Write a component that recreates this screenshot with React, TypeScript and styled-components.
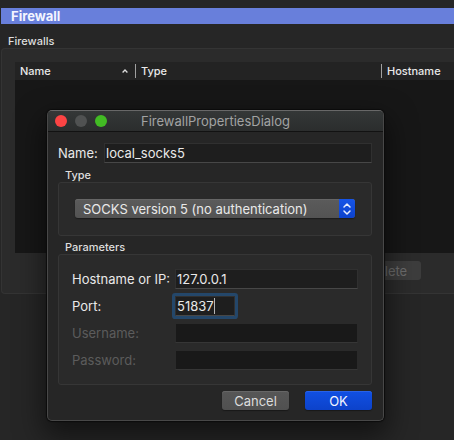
import React from "react";
import styled, { createGlobalStyle } from "styled-components";

const GlobalStyle = createGlobalStyle`
  *, *::before, *::after { box-sizing: border-box; }
  html, body { margin: 0; background: #262626; }
  body, button, input, select {
    font-family: Inter, "Liberation Sans", sans-serif;
    font-size: 13px;
    color: #e9e9e9;
  }
`;

const Page = styled.main`
  position: relative;
  min-height: 100vh;
  padding: 8px 0 0 1px;
  overflow: hidden;
  background: #262626;
`;

const Banner = styled.h1`
  margin: 0;
  padding-left: 10px;
  height: 16px;
  font-size: 13px;
  line-height: 16px;
  font-weight: 700;
  color: #f4f5ff;
  background: #687fdb;
`;

const Group = styled.fieldset<{ $gap: number }>`
  margin: ${(p) => p.$gap}px 0 0;
  padding: 0;
  border: 0;
  min-width: 0;
`;

const Caption = styled.legend<{ $height: number }>`
  display: block;
  padding: 0 0 0 7px;
  height: ${(p) => p.$height}px;
  line-height: ${(p) => p.$height}px;
  font-size: 11px;
  font-weight: 500;
  color: #dedede;
`;

const OuterPanel = styled.div`
  padding: 13px 0 13px 13px;
  border: 1px solid #343434;
  border-right: 0;
  border-radius: 4px 0 0 4px;
  background: #2b2b2b;
`;

const List = styled.table`
  width: 100%;
  table-layout: fixed;
  border-collapse: collapse;
  background: #171717;
`;

const Heading = styled.th<{ $width?: number }>`
  width: ${(p) => (p.$width ? `${p.$width}px` : "auto")};
  height: 18px;
  padding: 0;
  background: #232323;
  font-size: 11px;
  line-height: 16px;
  font-weight: 500;
  text-align: left;
`;

const HeadingInner = styled.div<{ $divider?: boolean }>`
  display: flex;
  align-items: center;
  justify-content: space-between;
  height: 14px;
  padding: 0 7px 0 5px;
  border-right: ${(p) => (p.$divider ? "1px solid #a0a0a0" : "0")};
`;

const EmptyCell = styled.td`
  height: 173px;
  padding: 0;
`;

const Actions = styled.div`
  display: flex;
  justify-content: flex-end;
  padding: 8px 33px 0 0;
`;

const Button = styled.button<{ $primary?: boolean }>`
  width: 67px;
  height: 19px;
  padding: 0;
  border: 0;
  border-radius: 3px;
  line-height: 18px;
  color: ${(p) => (p.$primary ? "#f2f5ff" : "#dddddd")};
  background: ${(p) =>
    p.$primary ? "linear-gradient(#1150e3, #0c42ca)" : "linear-gradient(#575757, #505050)"};
  box-shadow: inset 0 1px 0 ${(p) => (p.$primary ? "#2862e8" : "#666666")}, 0 1px 1px #191919;

  &:disabled {
    color: #6c6c6c;
    background: #3d3d3d;
    box-shadow: none;
  }
`;

const Dialog = styled.section`
  position: absolute;
  top: 110px;
  left: 47px;
  right: 70px;
  border: 1px solid #484848;
  border-top-color: #686868;
  border-radius: 5px;
  background: #262626;
  box-shadow: 0 0 1px 1px #0c0c0c, 0 12px 28px 4px rgba(0, 0, 0, 0.5);
`;

const TitleBar = styled.header`
  display: grid;
  grid-template-columns: 1fr auto 1fr;
  align-items: center;
  height: 21px;
  padding: 0 7px;
  border-bottom: 1px solid #121212;
  border-radius: 4px 4px 0 0;
  background: linear-gradient(#343737, #2b2d2d);
`;

const Lights = styled.div`
  display: flex;
  gap: 8px;
`;

const Light = styled.button<{ $color: string }>`
  width: 12px;
  height: 12px;
  padding: 0;
  border: 0;
  border-radius: 50%;
  background: ${(p) => p.$color};
`;

const Title = styled.h2`
  margin: 0;
  font-size: 13px;
  line-height: 20px;
  font-weight: 400;
  color: #a2a3a3;
`;

const Form = styled.form`
  padding: 11px 11px 10px 10px;
`;

const NameRow = styled.div`
  display: grid;
  grid-template-columns: 46px 1fr;
  align-items: center;
`;

const Panel = styled.div<{ $pad: string }>`
  padding: ${(p) => p.$pad};
  border: 1px solid #363636;
  border-radius: 3px;
  background: #2a2a2a;
`;

const Fields = styled.div`
  display: grid;
  grid-template-columns: 103px 1fr;
  row-gap: 7px;
  align-items: center;
`;

const Label = styled.label<{ $dim?: boolean }>`
  line-height: 20px;
  white-space: nowrap;
  color: ${(p) => (p.$dim ? "#5c5c5c" : "#e9e9e9")};
`;

const TextBox = styled.input`
  display: block;
  width: 100%;
  min-width: 0;
  height: 20px;
  padding: 0 1px;
  border: 1px solid #303030;
  border-bottom-color: #474747;
  border-radius: 0;
  outline: none;
  background: #1e1e1e;

  &:disabled {
    border-color: #2a2a2a;
    border-bottom-color: #363636;
    background: #191919;
  }
`;

const PortBox = styled.div`
  position: relative;
  width: 60px;
  border-radius: 1px;
  box-shadow: 0 0 0 3px #24476a;
`;

const Caret = styled.span`
  position: absolute;
  top: 2px;
  left: 39px;
  width: 1px;
  height: 16px;
  background: #b5b5b5;
`;

const SelectWrap = styled.div`
  position: relative;
`;

const Select = styled.select`
  appearance: none;
  display: block;
  width: 100%;
  height: 19px;
  padding: 1px 20px 0 8px;
  border: 0;
  border-radius: 3px;
  outline: none;
  line-height: 18px;
  background: linear-gradient(#5b5b5b, #535353);
  box-shadow: inset 0 1px 0 #666666, 0 1px 1px #1c1c1c;
`;

const Stepper = styled.span`
  position: absolute;
  top: 0;
  right: 0;
  bottom: 0;
  display: grid;
  place-items: center;
  width: 16px;
  border-radius: 0 3px 3px 0;
  background: linear-gradient(#1554e8, #0c42cc);
  pointer-events: none;
`;

const Footer = styled.footer`
  display: flex;
  justify-content: flex-end;
  gap: 16px;
  padding-top: 6px;
`;

export default function App() {
  return (
    <Page>
      <GlobalStyle />
      <Banner>Firewall</Banner>
      <Group $gap={10}>
        <Caption $height={14}>Firewalls</Caption>
        <OuterPanel>
          <List>
            <thead>
              <tr>
                <Heading $width={121} aria-sort="ascending">
                  <HeadingInner $divider>
                    Name
                    <svg width="6" height="4" viewBox="0 0 6 4" fill="none" stroke="#dddddd" strokeWidth="1.3">
                      <path d="M0.6 3.5 3 1 5.4 3.5" />
                    </svg>
                  </HeadingInner>
                </Heading>
                <Heading $width={246}>
                  <HeadingInner $divider>Type</HeadingInner>
                </Heading>
                <Heading>
                  <HeadingInner>Hostname</HeadingInner>
                </Heading>
              </tr>
            </thead>
            <tbody>
              <tr>
                <EmptyCell colSpan={3} />
              </tr>
            </tbody>
          </List>
          <Actions>
            <Button type="button" disabled>Delete</Button>
          </Actions>
        </OuterPanel>
      </Group>

      <Dialog role="dialog" aria-labelledby="dialog-title">
        <TitleBar>
          <Lights>
            <Light type="button" aria-label="Close" $color="#fc4444" />
            <Light type="button" aria-label="Minimize" $color="#505252" />
            <Light type="button" aria-label="Zoom" $color="#42bb24" />
          </Lights>
          <Title id="dialog-title">FirewallPropertiesDialog</Title>
        </TitleBar>
        <Form onSubmit={(e) => e.preventDefault()}>
          <NameRow>
            <Label htmlFor="name">Name:</Label>
            <TextBox id="name" defaultValue="local_socks5" />
          </NameRow>
          <Group $gap={5}>
            <Caption $height={14}>Type</Caption>
            <Panel $pad="16px 16px 17px">
              <SelectWrap>
                <Select aria-label="Type" defaultValue="socks5">
                  <option value="socks5">SOCKS version 5 (no authentication)</option>
                </Select>
                <Stepper>
                  <svg width="10" height="14" viewBox="0 0 10 14" fill="none" stroke="#e6edff" strokeWidth="1.5" strokeLinecap="round" strokeLinejoin="round">
                    <path d="M2 5 5 2 8 5M2 9 5 12 8 9" />
                  </svg>
                </Stepper>
              </SelectWrap>
            </Panel>
          </Group>
          <Group $gap={4}>
            <Caption $height={14}>Parameters</Caption>
            <Panel $pad="14px 13px">
              <Fields>
                <Label htmlFor="host">Hostname or IP:</Label>
                <TextBox id="host" defaultValue="127.0.0.1" />
                <Label htmlFor="port">Port:</Label>
                <PortBox>
                  <TextBox id="port" defaultValue="51837" />
                  <Caret />
                </PortBox>
                <Label htmlFor="user" $dim>Username:</Label>
                <TextBox id="user" disabled />
                <Label htmlFor="pass" $dim>Password:</Label>
                <TextBox id="pass" type="password" disabled />
              </Fields>
            </Panel>
          </Group>
          <Footer>
            <Button type="button">Cancel</Button>
            <Button type="submit" $primary>OK</Button>
          </Footer>
        </Form>
      </Dialog>
    </Page>
  );
}
